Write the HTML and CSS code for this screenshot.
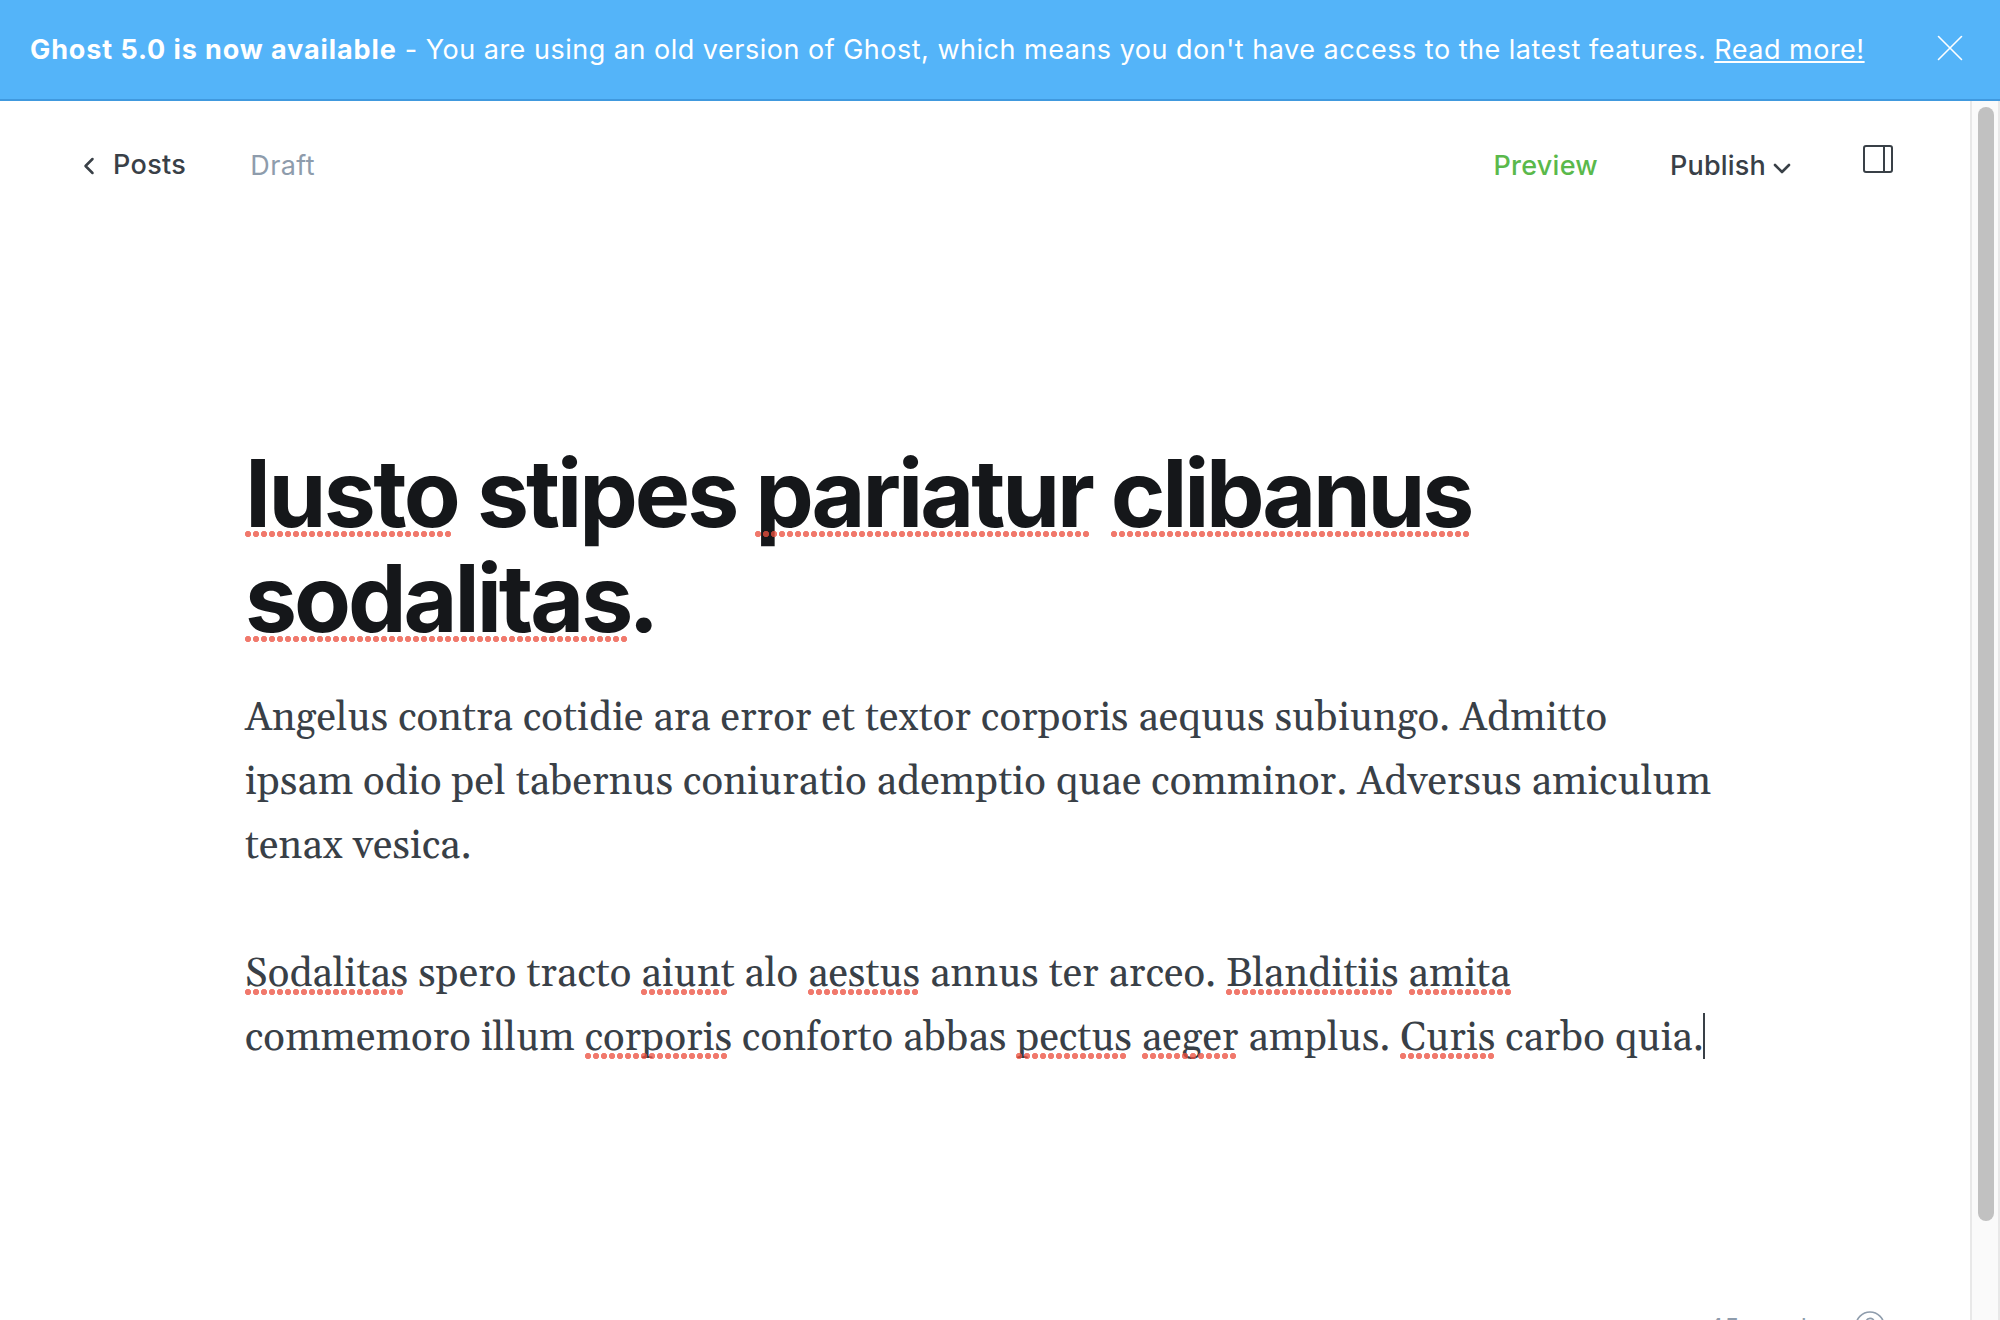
FILE: index.html
```
<!DOCTYPE html>
<html lang="en">
<head>
<meta charset="utf-8">
<title>Post editor</title>
<link rel="stylesheet" href="styles.css">
</head>
<body>
<aside class="banner">
  <p class="banner-text"><b>Ghost 5.0 is now available</b> - You are using an old version of Ghost, which means you don't have access to the latest features. <a class="banner-link">Read more!</a></p>
  <svg class="banner-close" viewBox="0 0 26 26" fill="none" stroke="#fff" stroke-width="1.6" stroke-linecap="round"><path d="M1.5 1.5l23 23M24.5 1.5l-23 23"/></svg>
</aside>
<div class="viewport">
  <main class="editor">
    <header class="toolbar">
      <a class="back">
        <svg class="back-icon" viewBox="0 0 12 18" fill="none" stroke="#394047" stroke-width="2.5" stroke-linecap="round" stroke-linejoin="round"><path d="M9.5 2L2.5 9l7 7"/></svg>
        <span>Posts</span>
      </a>
      <span class="status">Draft</span>
      <a class="preview">Preview</a>
      <a class="publish"><span>Publish</span>
        <svg class="publish-icon" viewBox="0 0 18 12" fill="none" stroke="#394047" stroke-width="2.6" stroke-linecap="round" stroke-linejoin="round"><path d="M2 2l7 7 7-7"/></svg>
      </a>
      <svg class="sidebar-icon" viewBox="0 0 30 28" fill="none" stroke="#394047" stroke-width="2"><rect x="1" y="1" width="28" height="26" rx="2"/><path d="M21 1v26"/></svg>
    </header>
    <article class="post">
      <h1 class="title"><span class="sp loose">Iusto</span> stipes <span class="sp">pariatur</span> <span class="sp tight">clibanus</span><br><span class="sp">sodalitas</span><span class="stop">.</span></h1>
      <p class="para">Angelus contra cotidie ara error et textor corporis aequus subiungo. Admitto<br>ipsam odio pel tabernus coniuratio ademptio quae comminor. Adversus amiculum<br>tenax vesica.</p>
      <p class="para"><span class="sp">Sodalitas</span> spero tracto <span class="sp">aiunt</span> alo <span class="sp">aestus</span> annus ter arceo. <span class="sp">Blanditiis</span> <span class="sp">amita</span><br>commemoro illum <span class="sp">corporis</span> conforto abbas <span class="sp">pectus</span> <span class="sp">aeger</span> amplus. <span class="sp">Curis</span> carbo quia.<span class="caret"></span></p>
    </article>
    <footer class="footer">
      <span>45 words</span>
      <svg class="help" viewBox="0 0 30 30" fill="none" stroke="#8e9cac" stroke-width="1.6"><circle cx="15" cy="15" r="14"/><path d="M11 12c0-6 8-6 8-1 0 3-4 3-4 7M15 21v2"/></svg>
    </footer>
  </main>
  <div class="scrollbar"><div class="thumb"></div></div>
</div>
</body>
</html>
```
FILE: styles.css
```
* { box-sizing: border-box; }
body { margin: 0; height: 1320px; overflow: hidden; display: flex; flex-direction: column; background: #fff; color: #394047; font-family: Inter, "Liberation Sans", sans-serif; font-size: 27px; }
p, h1 { margin: 0; }
svg { display: block; flex: none; }

.banner { height: 101px; flex: none; display: flex; align-items: flex-start; justify-content: space-between; padding: 0 37px 0 30px; background: #54b4f9; border-bottom: 2px solid #4099de; color: #fff; }
.banner-text { line-height: 33px; padding-top: 33px; white-space: nowrap; letter-spacing: .5px; }
.banner-text b { font-weight: 700; letter-spacing: .9px; }
.banner-link { text-decoration: underline; text-decoration-thickness: 2px; text-underline-offset: 2px; }
.banner-close { width: 26px; height: 26px; margin-top: 35px; }

.viewport { flex: 1; min-height: 0; display: flex; }
.editor { flex: 1; min-width: 0; overflow: hidden; display: flex; flex-direction: column; }

.toolbar { flex: none; height: 340px; padding: 44px 77px 0 83px; display: flex; align-items: flex-start; line-height: 40px; }
.back { display: flex; gap: 18px; font-weight: 500; letter-spacing: .35px; }
.back-icon { width: 12px; height: 18px; margin-top: 12px; }
.status { margin: 1px 0 0 64px; color: #8e9cac; letter-spacing: .4px; }
.preview { margin: 1px 0 0 auto; color: #5ab94b; font-weight: 500; letter-spacing: .25px; }
.publish { display: flex; gap: 7px; margin: 1px 0 0 72px; font-weight: 500; letter-spacing: .2px; }
.publish-icon { width: 18px; height: 12px; margin-top: 17px; }
.sidebar-icon { width: 30px; height: 28px; margin-left: 72px; }

.post { width: 1480px; margin: 0 auto; flex: none; white-space: nowrap; }
.title { color: #15171a; font-size: 93px; line-height: 105px; font-weight: 700; letter-spacing: -3.05px; }
.title .loose { letter-spacing: -2.65px; }
.title .tight { letter-spacing: -3.3px; }
.stop { margin-left: -2px; }
.title + .para { margin-top: 36px; }
.para { font: 40px/64px Gelasio, Georgia, "Liberation Serif", serif; letter-spacing: .2px; margin-bottom: 64px; }

/* spell-check underline: whole dots only */
.sp { display: inline-block; position: relative; }
.sp::after { content: ""; position: absolute; left: 0; width: round(down, 100% + 2px, 8px); top: 46px; height: 6px; background: radial-gradient(circle at 3px 3px, rgba(236, 79, 62, .76) 2.8px, transparent 3.4px) 0 0 / 8px 6px repeat-x; }
.title .sp::after { top: 90px; }

.caret { display: inline-block; width: 2px; height: 46px; margin-left: -1px; margin-right: -2px; vertical-align: -9px; background: #394047; }

.footer { flex: none; display: flex; justify-content: flex-end; gap: 34px; margin-top: 176px; padding-right: 85px; color: #8e9cac; font-size: 24px; letter-spacing: .8px; line-height: 30px; }
.footer span { padding-top: 2px; }
.help { width: 30px; height: 30px; }

.scrollbar { width: 30px; flex: none; padding: 6px 4px 0 6px; background: #fafafa; border: solid #e8e8e8; border-width: 0 2px; }
.thumb { width: 16px; height: 1114px; border-radius: 8px; background: #c1c1c1; }
```
